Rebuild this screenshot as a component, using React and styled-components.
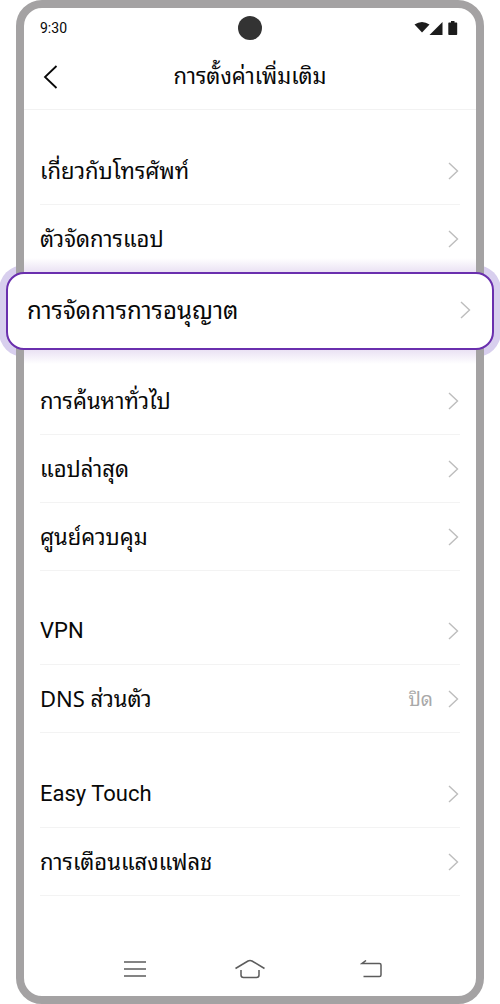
import React from 'react';
import styled, { createGlobalStyle } from 'styled-components';

const GlobalStyle = createGlobalStyle`
    * {
        box-sizing: border-box;
    }

    body {
        margin: 0;
        background-color: #ffffff;
        color: #080808;
        font-family: 'Noto Sans', 'Noto Sans Thai Looped', sans-serif;
    }
`;

const Stage = styled.div`
    min-height: 100vh;
    padding: 0 16px;

    display: flex;
    overflow-x: hidden;
    isolation: isolate;
`;

const Phone = styled.div`
    flex: 1;
    min-width: 0;

    display: flex;
    flex-direction: column;

    border: 8px solid #a4a2a3;
    border-radius: 26px;
    background-color: #ffffff;
`;

const StatusBar = styled.div`
    height: 40px;
    padding: 0 16px;

    display: grid;
    grid-template-columns: 1fr auto 1fr;
    align-items: center;
`;

const Clock = styled.span`
    font-family: Roboto, sans-serif;
    font-size: 14px;
    line-height: 20px;
`;

const Camera = styled.span`
    width: 24px;
    height: 24px;

    border-radius: 50%;
    background-color: #333333;
`;

const StatusIcons = styled.svg`
    justify-self: end;
`;

const Header = styled.header`
    height: 62px;
    padding: 0 16px 4px;

    display: grid;
    grid-template-columns: 1fr auto 1fr;
    align-items: center;

    border-bottom: 1px solid #f2f2f2;
`;

const IconButton = styled.button`
    padding: 0;

    display: flex;
    justify-self: ${(props) => props.$align || 'start'};

    border: 0;
    background: none;
    color: inherit;
    cursor: pointer;
`;

const Title = styled.h1`
    margin: 0;
    padding-bottom: 4px;

    font-size: 22px;
    font-weight: 400;
    line-height: 28px;
`;

const List = styled.main`
    flex: 1;
    padding: 0 16px;
`;

const Group = styled.div`
    padding-top: ${(props) => props.$space}px;
`;

const Row = styled.a`
    height: ${(props) => (props.$last ? 67 : 68)}px;
    padding-right: 1px;

    display: flex;
    align-items: center;

    border-bottom: ${(props) => (props.$last ? '0' : '1px solid #f3f3f3')};
    color: inherit;
    text-decoration: none;
`;

// Soft glow above and below the highlighted row, inside the screen
const Highlight = styled.div`
    margin: 0 -16px;
    position: relative;

    &::before {
        content: '';
        position: absolute;
        inset: -14px 0;
        background: linear-gradient(
            rgba(106, 47, 174, 0),
            rgba(106, 47, 174, .14) 14px,
            rgba(106, 47, 174, .14) calc(100% - 14px),
            rgba(106, 47, 174, 0)
        );
    }
`;

// Wider than the phone; its ring goes behind the frame
const HighlightRow = styled(Row)`
    height: 78px;
    margin: 0 -18px;
    padding: 0 21px 2px 19px;
    position: relative;

    border: 2px solid #6a2fae;
    border-radius: 18px;
    background-color: #ffffff;

    &::before {
        content: '';
        position: absolute;
        inset: -9px;
        z-index: -1;
        border-radius: 25px;
        background-color: #d8cfee;
    }
`;

const Label = styled.span`
    flex: 1;
    padding-bottom: ${(props) => (props.$latin || props.$large ? 0 : 2)}px;

    font-family: ${(props) => (props.$latin ? 'Roboto' : "'Noto Sans', 'Noto Sans Thai Looped'")}, sans-serif;
    font-size: ${(props) => (props.$large ? 24 : 22)}px;
    line-height: 28px;
`;

const Value = styled.span`
    margin-right: 14px;

    color: #a9a9a9;
    font-size: 19px;
    line-height: 28px;
`;

const NavBar = styled.nav`
    height: 54px;
    padding: 0 94px;

    display: grid;
    grid-template-columns: 1fr auto 1fr;
    align-items: center;

    color: #5c5c5c;
`;

const Chevron = () => (
    <svg width="12" height="18" viewBox="0 0 12 18" fill="none" stroke="#bdbdbd" strokeWidth="1.4" aria-hidden="true">
        <path d="M2 1L10.500 9l-8.500 8" />
    </svg>
);

function Item({ label, value, latin, last }) {
    return (
        <Row href="#" $last={last}>
            <Label $latin={latin}>{label}</Label>
            {value && <Value>{value}</Value>}
            <Chevron />
        </Row>
    );
}

function App() {
    return (
        <Stage>
            <GlobalStyle />
            <Phone>
                <StatusBar>
                    <Clock>9:30</Clock>
                    <Camera />
                    <StatusIcons width="47" height="16" viewBox="0 0 47 16" fill="#1c1c1c" aria-hidden="true">
                        <path d="M1.500 4.500Q9 -.5 16.500 4.500L9 12.500z" />
                        <path d="M29.500 2v13H16.500z" />
                        <path d="M36 2.500h2V1h3.500v1.500h2q.7 0 .7.8v10.900q0 .8-.8.8h-7.300q-.8 0-.8-.8V3.300q0-.8.7-.8z" />
                    </StatusIcons>
                </StatusBar>
                <Header>
                    <IconButton aria-label="ย้อนกลับ">
                        <svg width="20" height="26" viewBox="0 0 20 26" fill="none" stroke="currentColor" strokeWidth="1.8">
                            <path d="M16.500 2L5 13l11.500 11" />
                        </svg>
                    </IconButton>
                    <Title>การตั้งค่าเพิ่มเติม</Title>
                </Header>
                <List>
                    <Group $space={27}>
                        <Item label="เกี่ยวกับโทรศัพท์" />
                        <Item label="ตัวจัดการแอป" last />
                    </Group>
                    <Highlight>
                        <HighlightRow href="#">
                            <Label $large>การจัดการการอนุญาต</Label>
                            <Chevron />
                        </HighlightRow>
                    </Highlight>
                    <Group $space={17}>
                        <Item label="การค้นหาทั่วไป" />
                        <Item label="แอปล่าสุด" />
                        <Item label="ศูนย์ควบคุม" />
                    </Group>
                    <Group $space={26}>
                        <Item label="VPN" latin />
                        <Item label="DNS ส่วนตัว" value="ปิด" />
                    </Group>
                    <Group $space={27}>
                        <Item label="Easy Touch" latin />
                        <Item label="การเตือนแสงแฟลช" />
                    </Group>
                </List>
                <NavBar>
                    <IconButton aria-label="เมนู">
                        <svg width="28" height="18" viewBox="0 0 28 18" stroke="currentColor" strokeWidth="1.5">
                            <path d="M6 2h22M6 9h22M6 16h22" />
                        </svg>
                    </IconButton>
                    <IconButton aria-label="หน้าหลัก">
                        <svg width="32" height="20" viewBox="0 0 32 20" fill="none" stroke="currentColor" strokeWidth="1.5">
                            <path d="M1.500 9.500L14 2q2-1 4 0l12.500 7.500" />
                            <path d="M7 11v5q0 2.500 2.500 2.500h13q2.500 0 2.500-2.500v-5" />
                        </svg>
                    </IconButton>
                    <IconButton aria-label="กลับ" $align="end">
                        <svg width="22" height="18" viewBox="0 0 22 18" fill="none" stroke="currentColor" strokeWidth="1.5">
                            <path d="M6 .5L2 3.500H19.500q1.500 0 1.500 1.500v10q0 1.500-1.500 1.500H3.500" />
                        </svg>
                    </IconButton>
                </NavBar>
            </Phone>
        </Stage>
    );
}

export default App;
